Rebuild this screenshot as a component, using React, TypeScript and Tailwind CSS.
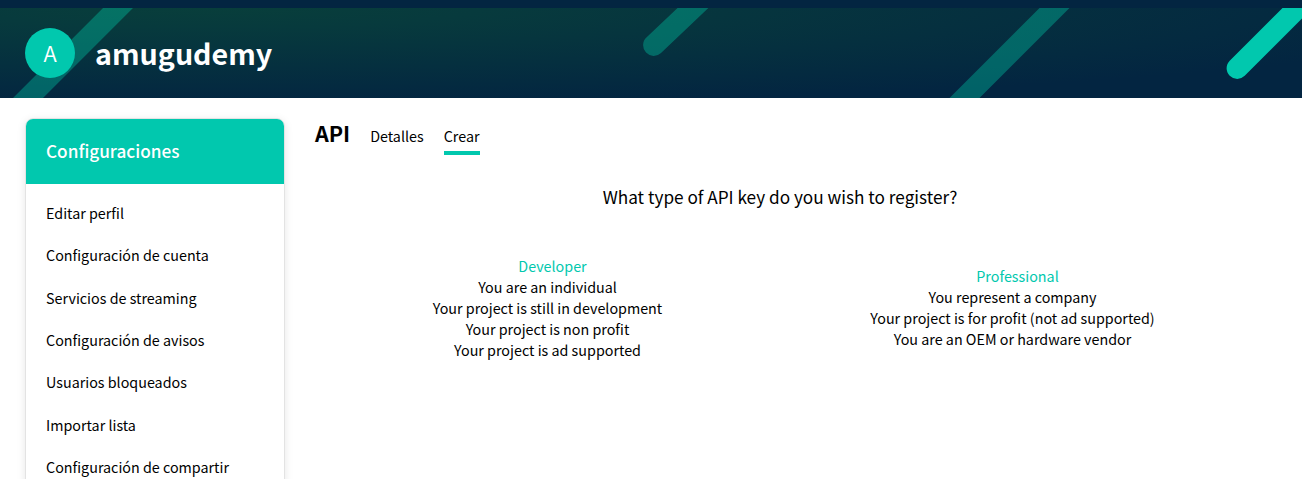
const menu = [
  'Editar perfil',
  'Configuración de cuenta',
  'Servicios de streaming',
  'Configuración de avisos',
  'Usuarios bloqueados',
  'Importar lista',
  'Configuración de compartir',
];

const developer = [
  'You are an individual',
  'Your project is still in development',
  'Your project is non profit',
  'Your project is ad supported',
];

const professional = [
  'You represent a company',
  'Your project is for profit (not ad supported)',
  'You are an OEM or hardware vendor',
];

function Stripes() {
  return (
    <svg className="absolute inset-0" width="1302" height="90" viewBox="0 8 1302 90" aria-hidden="true">
      <g stroke="#01d1ad" strokeOpacity="0.36" strokeWidth="21.2" strokeLinecap="round">
        <path d="M-12 138L148 -22" />
        <path d="M653.7 45.3L714.7 -12.7" />
        <path d="M924.5 138L1084.5 -22" />
      </g>
      <path d="M1237.2 68.3L1320 -14.5" stroke="#01c8ae" strokeWidth="21.2" strokeLinecap="round" />
    </svg>
  );
}

function Choice({ title, lines }: { title: string; lines: string[] }) {
  return (
    <div className="text-center text-[14.32px] leading-[21px]">
      <a className="relative left-[5px] text-[#01c8ae]">{title}</a>
      {lines.map((line) => (
        <p key={line}>{line}</p>
      ))}
    </div>
  );
}

export default function App() {
  return (
    <div className="h-[479px] w-[1302px] overflow-hidden bg-white font-['Noto_Sans_CJK_SC','Noto_Sans',sans-serif] text-black">
      <div className="h-2 bg-[#032541]" />
      <header className="relative h-[90px] overflow-hidden bg-[radial-gradient(1300px_98px_at_220px_0px,#083e3b_0%,#073a3d_20%,#032541_100%)]">
        <Stripes />
        <div className="relative flex h-full items-center pl-[25px]">
          <div className="flex size-[50px] items-center justify-center rounded-full bg-[#01c8ae] pb-[3px] text-[22px] font-[350] leading-none text-white">
            A
          </div>
          <h2 className="ml-5 text-[28.65px] font-bold leading-[40px] text-white">amugudemy</h2>
        </div>
      </header>
      <div className="flex">
        <aside className="ml-[25px] mt-5 h-[400px] w-[260px] shrink-0 overflow-hidden rounded-t-lg border border-[#e3e3e3] shadow-[0_2px_8px_rgba(0,0,0,0.1)]">
          <h3 className="flex h-[65px] items-center bg-[#01c8ae] pb-px pl-5 text-[17.19px] font-medium text-white">
            Configuraciones
          </h3>
          <ul className="pt-[8px]">
            {menu.map((item) => (
              <li key={item} className="flex h-[42.33px] items-center pl-5 text-[14.32px] leading-[24px]">
                {item}
              </li>
            ))}
          </ul>
        </aside>
        <main className="ml-[30px] mt-5 w-[930px]">
          <nav className="flex h-[37px] gap-5">
            <h2 className="text-[21.49px] font-bold leading-[30px]">API</h2>
            <a className="h-[37px] text-[14.32px] leading-[35px]">Detalles</a>
            <a className="h-[37px] border-b-4 border-[#01c8ae] text-[14.32px] leading-[35px]">Crear</a>
          </nav>
          <p className="mt-[28px] text-center text-[17.19px] leading-[27px]">
            What type of API key do you wish to register?
          </p>
          <div className="mt-[45px] grid grid-cols-2 items-start">
            <Choice title="Developer" lines={developer} />
            <div className="pt-[10px]">
              <Choice title="Professional" lines={professional} />
            </div>
          </div>
        </main>
      </div>
    </div>
  );
}
